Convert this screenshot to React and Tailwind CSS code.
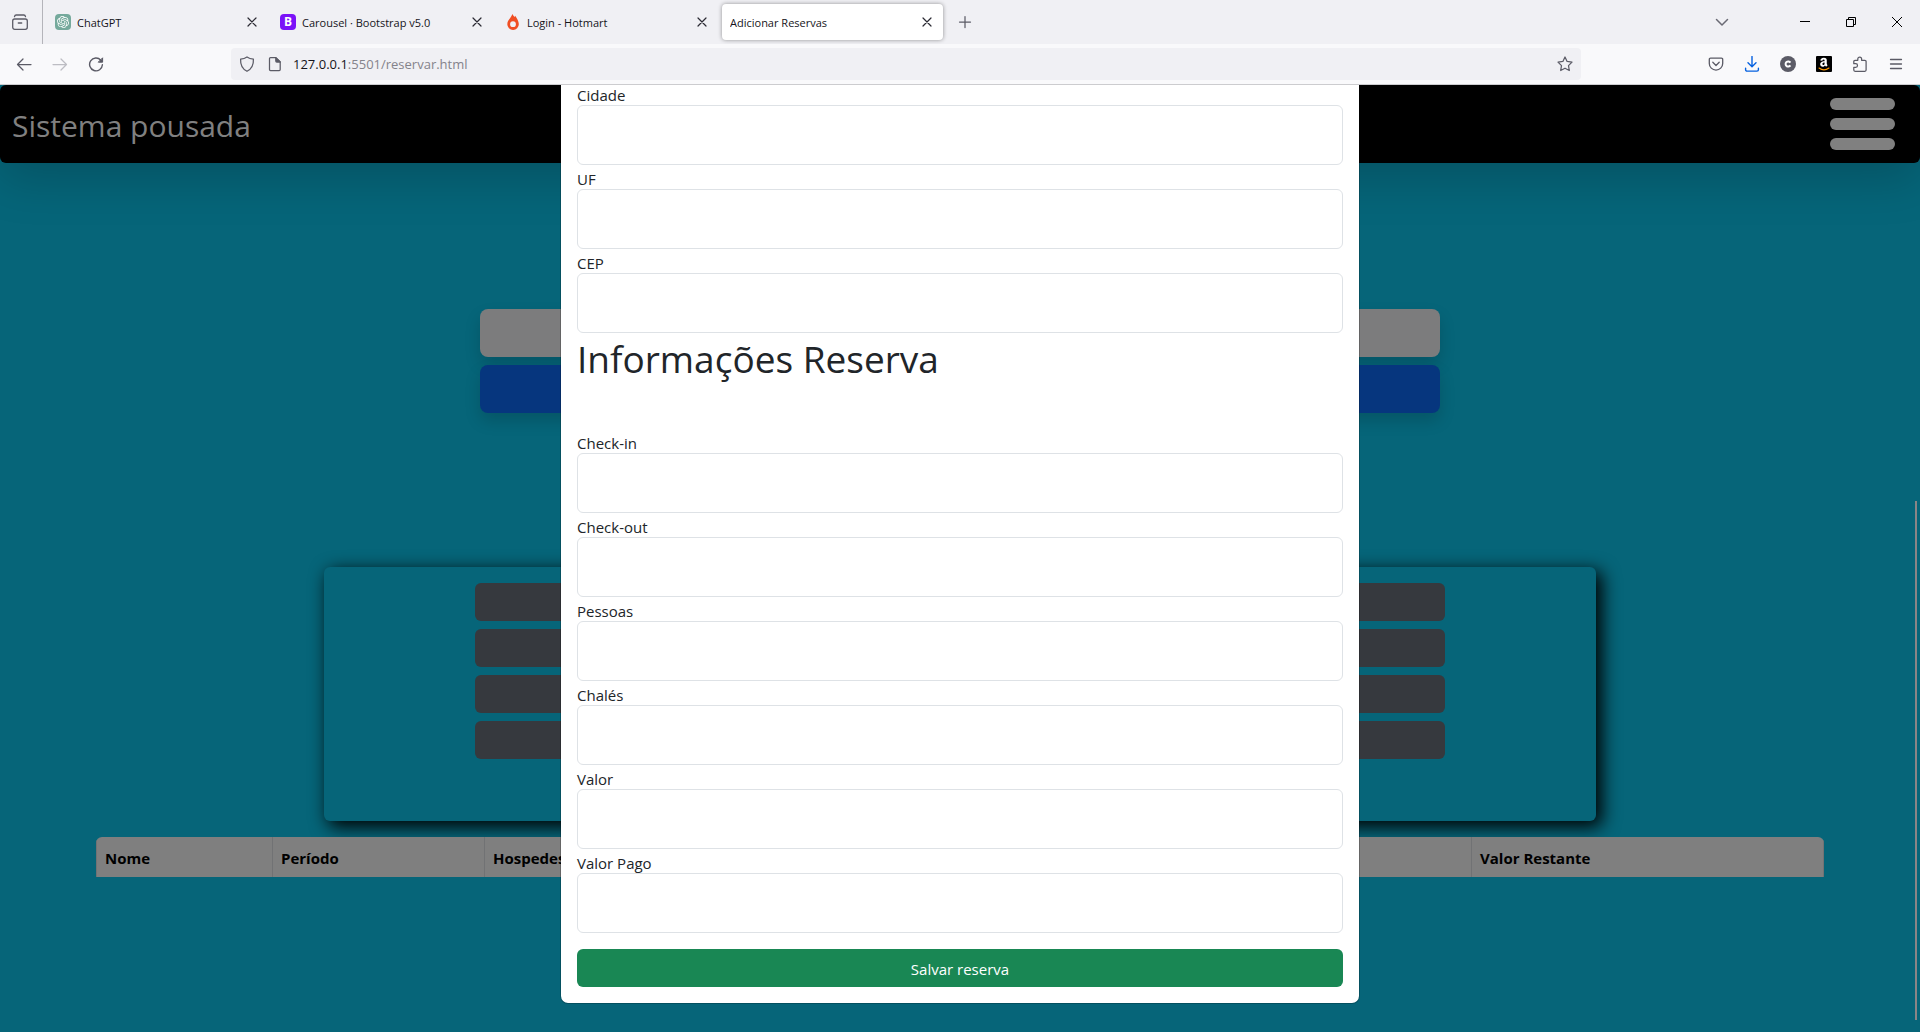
import React from "react";
import { SiOpenai } from "react-icons/si";

const guestFields = ["Cidade", "UF", "CEP"];
const bookingFields = ["Check-in", "Check-out", "Pessoas", "Chalés", "Valor", "Valor Pago"];

function Icon({ children, className = "size-4", ...rest }) {
  return (
    <svg
      viewBox="0 0 16 16"
      fill="none"
      stroke="currentColor"
      strokeWidth="1.25"
      strokeLinecap="round"
      strokeLinejoin="round"
      aria-hidden="true"
      className={className}
      {...rest}
    >
      {children}
    </svg>
  );
}

function Tab({ title, icon, active }) {
  return (
    <div className="w-[225px] px-0.5 py-1">
      <div
        className={
          active
            ? "flex h-9 items-center gap-1.5 rounded-sm bg-white pr-2 pl-2 shadow-[0_0_4px_rgba(0,0,0,0.4)]"
            : "flex h-9 items-center gap-1.5 pr-2 pl-2"
        }
      >
        {icon}
        <span className="flex-1 truncate pt-0.5 text-[11px] text-[#15141a]">{title}</span>
        <button type="button" aria-label={"Fechar " + title} className="grid size-4 place-items-center text-[#2b2a33]">
          <Icon strokeWidth="1.2">
            <path d="M4 4l8 8M12 4l-8 8" />
          </Icon>
        </button>
      </div>
    </div>
  );
}

function TabStrip() {
  return (
    <div className="flex h-11 bg-[#f0f0f4]">
      <div className="flex w-[43px] items-center border-r border-[#b4b4ba] pl-3">
        <button type="button" aria-label="Firefox View" className="text-[#5b5b66]">
          <Icon strokeWidth="1.3">
            <path d="M2.5 2.6C2.7 1.6 3.2 1 4.2 1h7.6c1 0 1.5.6 1.7 1.6" />
            <rect x=".7" y="5" width="14.6" height="10.3" rx="2" />
            <path d="M6.3 9h3.4" />
          </Icon>
        </button>
      </div>
      <div className="ml-0.5 flex">
        <Tab
          title="ChatGPT"
          icon={
            <span className="grid size-4 place-items-center rounded-sm bg-[#75a99c] text-white">
              <SiOpenai size={12} />
            </span>
          }
        />
        <Tab
          title="Carousel · Bootstrap v5.0"
          icon={
            <span className="grid size-4 place-items-center rounded-sm bg-[#7a12f8] text-[12px] leading-4 font-bold text-white">
              B
            </span>
          }
        />
        <Tab
          title="Login - Hotmart"
          icon={
            <svg viewBox="0 0 16 16" className="size-4" aria-hidden="true">
              <path
                fill="#f04e23"
                fillRule="evenodd"
                d="M7.4 0c.5 1.2 1.2 2 2.1 3l.7-1.3c1 1.6 3.6 5 3.6 8.5A5.7 5.7 0 0 1 8 16a5.7 5.7 0 0 1-5.7-5.8C2.3 7 4 5.8 5.2 4 6.1 2.7 6.9 1.6 7.4 0ZM8 7.3a2.9 2.9 0 1 0 0 5.800 2.9 2.9 0 0 0 0-5.8Z"
              />
            </svg>
          }
        />
        <Tab title="Adicionar Reservas" active />
      </div>
      <button type="button" aria-label="Nova aba" className="ml-3 text-[#5b5b66]">
        <Icon>
          <path d="M8 2.5v11M2.5 8h11" />
        </Icon>
      </button>
      <div className="ml-auto flex items-center">
        <button type="button" aria-label="Listar abas" className="mr-[37px] grid w-[46px] place-items-center text-[#6a6a74]">
          <Icon strokeWidth="1.5">
            <path d="M2.5 5.5L8 11l5.5-5.5" />
          </Icon>
        </button>
        <button type="button" aria-label="Minimizar" className="grid h-11 w-[46px] place-items-center text-black">
          <Icon strokeWidth="1" strokeLinecap="butt">
            <path d="M3 7.5h10" />
          </Icon>
        </button>
        <button type="button" aria-label="Restaurar" className="grid h-11 w-[46px] place-items-center text-black">
          <Icon strokeWidth="1" strokeLinecap="butt" strokeLinejoin="miter">
            <path d="M3.5 5.5h7v7h-7zM5.5 5.5v-2h7v7h-2" />
          </Icon>
        </button>
        <button type="button" aria-label="Fechar" className="grid h-11 w-[46px] place-items-center text-black">
          <Icon strokeWidth="1" strokeLinecap="butt">
            <path d="M3 3l10 10M13 3L3 13" />
          </Icon>
        </button>
      </div>
    </div>
  );
}

function NavBar() {
  return (
    <div className="flex h-[41px] items-center border-b border-[#cccccf] bg-[#f9f9fb] text-[#5b5b66]">
      <div className="flex w-[231px] shrink-0 gap-5 pl-4">
        <button type="button" aria-label="Voltar">
          <Icon>
            <path d="M15 8.5H1.5M7 3L1.5 8.5 7 14" />
          </Icon>
        </button>
        <button type="button" aria-label="Avançar" disabled className="text-[#bdbdc3]">
          <Icon>
            <path d="M1 8.5h13.5M9 3l5.5 5.5L9 14" />
          </Icon>
        </button>
        <button type="button" aria-label="Recarregar">
          <Icon strokeWidth="1.4">
            <path d="M12.8 4.2A6.4 6.4 0 1 0 14.4 8.8" />
            <path d="M14.6 2.2v4h-4z" fill="currentColor" strokeWidth="1" />
          </Icon>
        </button>
      </div>
      <div className="flex h-8 flex-1 items-center rounded-sm bg-[#f0f0f4] px-2">
        <Icon>
          <path d="M8 .9c1.8 1.3 4 2 6.400 2.200C14.7 8.5 12.8 12.9 8 15.3 3.2 12.9 1.3 8.5 1.6 3.1 4 2.9 6.2 2.2 8 .9Z" />
        </Icon>
        <Icon className="ml-3 size-4">
          <path d="M3.5 1.600h5.300l4.400 4.400v7.600a1 1 0 0 1-1 1H3.500a1 1 0 0 1-1-1v-11a1 1 0 0 1 1-1Z" />
          <path d="M8.800 1.600v3.400a1 1 0 0 0 1 1h3.400Z" fill="currentColor" />
        </Icon>
        <a href="#" className="ml-2.5 flex-1 pt-0.5 text-[13px] text-[#84838b]">
          <span className="text-[#15141a]">127.0.0.1</span>:5501/reservar.html
        </a>
        <button type="button" aria-label="Favoritar">
          <Icon>
            <path d="M8 1l2.100 4.400 4.900.7-3.500 3.500.8 4.900L8 12.200l-4.300 2.300.8-4.900L1 6.100l4.900-.7Z" />
          </Icon>
        </button>
      </div>
      <div className="flex w-[339px] shrink-0 justify-end gap-5 pr-4">
        <button type="button" aria-label="Pocket">
          <Icon strokeWidth="1.3">
            <path d="M2.500 2.200h11a1.200 1.200 0 0 1 1.200 1.200v4a6.700 6.700 0 0 1-13.400 0v-4a1.200 1.200 0 0 1 1.200-1.200Z" />
            <path d="M4.800 6.300L8 9.500l3.200-3.200" />
          </Icon>
        </button>
        <button type="button" aria-label="Downloads" className="text-[#0561e0]">
          <Icon strokeWidth="1.4">
            <path d="M8 .5v10M4 6.700l4 4 4-4M1.600 12.200v1.500a1.400 1.400 0 0 0 1.400 1.400h10a1.400 1.400 0 0 0 1.400-1.400v-1.500" />
          </Icon>
        </button>
        <button
          type="button"
          aria-label="Conta"
          className="grid size-4 place-items-center rounded-full bg-[#5b5b66] text-white"
        >
          <Icon strokeWidth="2" strokeLinecap="butt">
            <path d="M10.400 6.600a2.600 2.600 0 1 0 0 2.800" />
          </Icon>
        </button>
        <button type="button" aria-label="Amazon" className="grid size-4 place-items-center rounded-[1px] bg-black">
          <svg viewBox="0 0 16 16" className="size-4" aria-hidden="true">
            <path
              fill="#fff"
              transform="translate(1.9 1) scale(0.026)"
              d="M257.200 162.700c-48.700 1.800-169.500 15.500-169.500 117.500 0 109.500 138.300 114 183.500 43.200 6.500 10.200 35.400 37.500 45.300 46.800l56.800-56S341 288.900 341 261.400V114.300C341 89 316.500 32 228.700 32 140.700 32 94 87 94 136.300l73.500 6.800c16.300-49.500 54.200-49.500 54.200-49.500 40.700-.1 35.500 29.800 35.500 69.100zm0 86.800c0 80-84.200 68-84.200 17.200 0-47.200 50.500-56.700 84.200-57.800v40.600z"
            />
            <path d="M3 12c3 2.300 7 2.300 10 0" fill="none" stroke="#f90" strokeWidth="1.1" strokeLinecap="round" />
          </svg>
        </button>
        <button type="button" aria-label="Extensões">
          <Icon>
            <path d="M5.800 4.300V3a1.900 1.900 0 0 1 3.800 0v1.300h3.300a1.200 1.200 0 0 1 1.200 1.200v8.600a1.200 1.200 0 0 1-1.200 1.200H3a1.200 1.200 0 0 1-1.200-1.200v-2.800h1.900a1.800 1.800 0 0 0 0-3.600H1.800V5.500A1.200 1.200 0 0 1 3 4.300Z" />
          </Icon>
        </button>
        <button type="button" aria-label="Menu">
          <Icon strokeWidth="1.3">
            <path d="M2.500 3.500h11M2.500 8h11M2.500 12.500h11" />
          </Icon>
        </button>
      </div>
    </div>
  );
}

function Field({ label }) {
  return (
    <label className="block pt-1 text-[15px] leading-5 text-[#212529]">
      {label}
      <input type="text" className="block h-[60px] w-full rounded-md border border-[#dee2e6] bg-white px-3" />
    </label>
  );
}

function BookingDialog() {
  return (
    <div className="absolute inset-0 flex flex-col items-center justify-end overflow-hidden pb-7">
      <div
        role="dialog"
        aria-label="Reserva"
        className="w-full max-w-[800px] shrink-0 rounded-lg border border-black/20 bg-white bg-clip-padding p-4"
      >
        <form>
          {guestFields.map((name) => (
            <Field key={name} label={name} />
          ))}
          <h1 className="mb-11 text-[37px] leading-[52px] text-[#212529]">Informações Reserva</h1>
          {bookingFields.map((name) => (
            <Field key={name} label={name} />
          ))}
          <button type="button" className="mt-4 block h-[38px] w-full rounded-md bg-[#198754] pt-0.5 text-[15px] text-white">
            Salvar reserva
          </button>
        </form>
      </div>
    </div>
  );
}

function Page() {
  return (
    <div className="relative flex-1 overflow-hidden bg-[#066579]">
      <header className="flex h-[78px] items-center justify-between rounded-md bg-black pr-[25px] pl-3 shadow-[0_16px_48px_rgba(0,0,0,0.175)]">
        <a href="#" className="pt-0.5 text-[30px] text-[#808080]">
          Sistema pousada
        </a>
        <button type="button" aria-label="Abrir menu" className="flex w-[65px] flex-col gap-2">
          <span className="h-3 w-full rounded-full bg-[#808080]" />
          <span className="h-3 w-full rounded-full bg-[#808080]" />
          <span className="h-3 w-full rounded-full bg-[#808080]" />
        </button>
      </header>
      <main className="flex flex-col items-center">
        <div className="mt-[146px] flex w-1/2 flex-col gap-2">
          <button
            type="button"
            aria-label="Pesquisar"
            className="h-12 rounded-lg bg-[#7c7c7d] shadow-[0_8px_16px_rgba(0,0,0,0.15)]"
          />
          <button
            type="button"
            aria-label="Adicionar"
            className="h-12 rounded-lg bg-[#06367e] shadow-[0_8px_16px_rgba(0,0,0,0.15)]"
          />
        </div>
        <section className="mt-[154px] flex h-[254px] w-full max-w-[1272px] flex-col items-center gap-2 rounded-md bg-[#066579] pt-4 shadow-[5px_5px_18px_1px_#000]">
          {["Janeiro", "Abril", "Julho", "Outubro"].map((name) => (
            <button
              key={name}
              type="button"
              aria-label={name}
              className="h-[38px] w-full max-w-[970px] rounded-md bg-[#36393e]"
            />
          ))}
        </section>
        <table className="relative mt-4 w-[90%] table-fixed border-separate border-spacing-0 overflow-hidden rounded-t-md bg-[#7f7f7f] text-left text-[15px] text-black">
          <thead>
            <tr className="h-10">
              <th className="w-[177px] border-x border-[#717274] pt-0.5 pl-2">Nome</th>
              <th className="w-[212px] border-r border-[#717274] pt-0.5 pl-2">Período</th>
              <th className="border-r border-[#717274] pt-0.5 pl-2">Hospedes</th>
              <th className="w-[352px] border-r border-[#717274] pt-0.5 pl-2">Valor Restante</th>
            </tr>
          </thead>
        </table>
      </main>
      <BookingDialog />
      <div className="absolute right-[3px] bottom-3 h-[519px] w-0.5 bg-[#8a8586]" />
    </div>
  );
}

export default function App() {
  return (
    <div className="flex h-screen flex-col font-['Open_Sans','Noto_Sans',sans-serif]">
      <TabStrip />
      <NavBar />
      <Page />
    </div>
  );
}
